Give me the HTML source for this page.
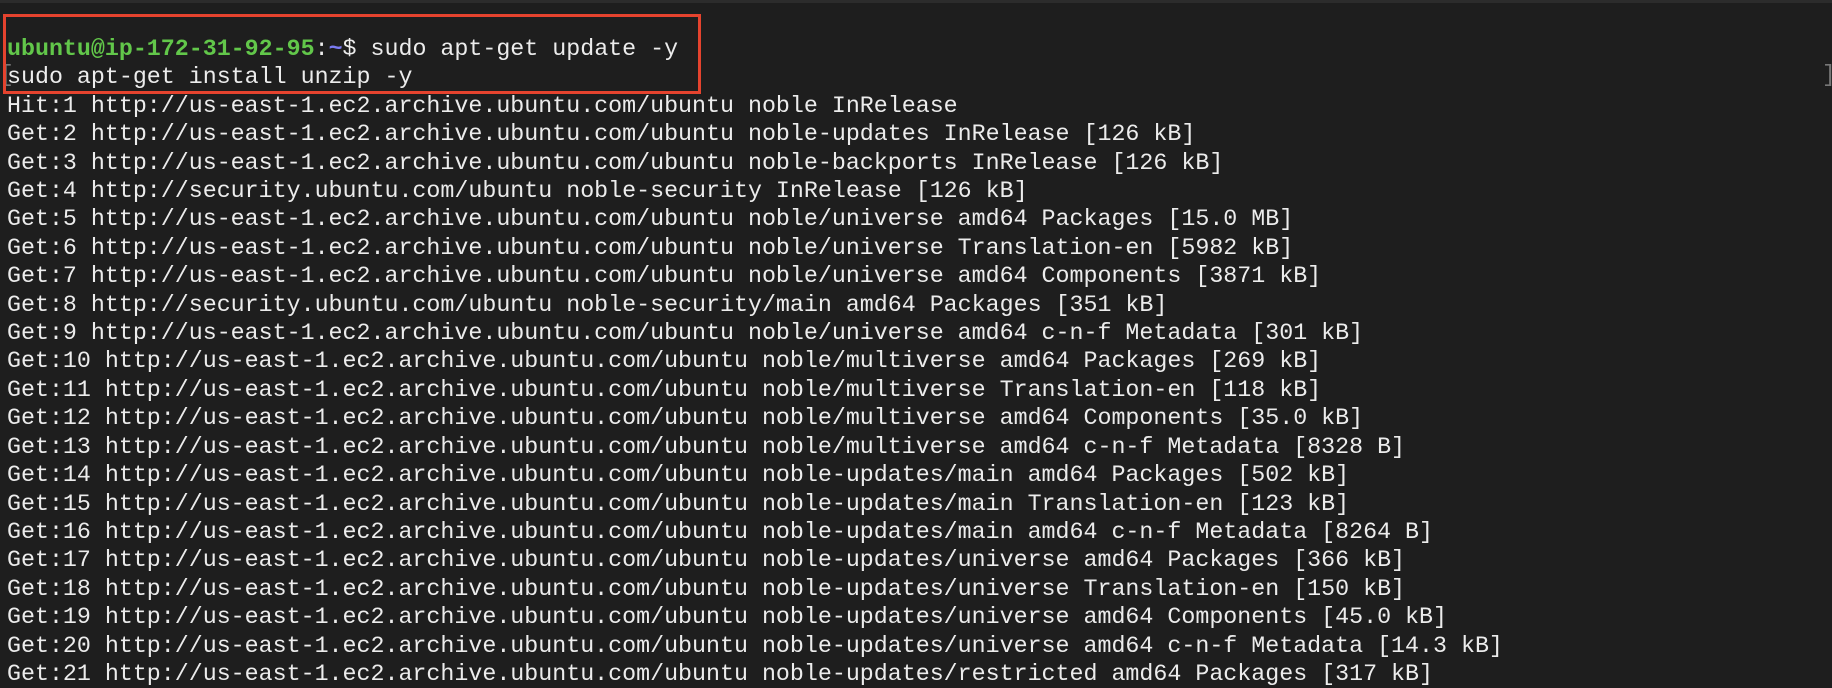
<!DOCTYPE html>
<html><head><meta charset="utf-8"><style>
html,body{margin:0;padding:0;}
body{width:1832px;height:684px;background:#1e1e1e;overflow:hidden;position:relative;}
.top{position:absolute;left:0;top:0;width:1832px;height:3px;background:#2c2c2c;}
pre{position:absolute;left:7px;top:35px;margin:0;font-family:"Liberation Mono",monospace;font-size:23.3px;line-height:28.4px;color:#ececec;}
.g{color:#62c74a;font-weight:bold;}
.b{color:#7b7bf2;font-weight:bold;}
.box{position:absolute;left:3px;top:14px;width:692px;height:74px;border:3px solid #e5432e;}
.lb{position:absolute;left:0;top:62px;font-family:"Liberation Mono",monospace;font-size:23px;color:#777;}
.rb{position:absolute;left:1822px;top:62px;font-family:"Liberation Mono",monospace;font-size:23px;color:#777;}
</style></head><body>
<div class="top"></div>
<div class="lb">[</div><div class="rb">]</div>
<pre><span class="g">ubuntu@ip-172-31-92-95</span>:<span class="b">~</span>$ sudo apt-get update -y
sudo apt-get install unzip -y
Hit:1 http://us-east-1.ec2.archive.ubuntu.com/ubuntu noble InRelease
Get:2 http://us-east-1.ec2.archive.ubuntu.com/ubuntu noble-updates InRelease [126 kB]
Get:3 http://us-east-1.ec2.archive.ubuntu.com/ubuntu noble-backports InRelease [126 kB]
Get:4 http://security.ubuntu.com/ubuntu noble-security InRelease [126 kB]
Get:5 http://us-east-1.ec2.archive.ubuntu.com/ubuntu noble/universe amd64 Packages [15.0 MB]
Get:6 http://us-east-1.ec2.archive.ubuntu.com/ubuntu noble/universe Translation-en [5982 kB]
Get:7 http://us-east-1.ec2.archive.ubuntu.com/ubuntu noble/universe amd64 Components [3871 kB]
Get:8 http://security.ubuntu.com/ubuntu noble-security/main amd64 Packages [351 kB]
Get:9 http://us-east-1.ec2.archive.ubuntu.com/ubuntu noble/universe amd64 c-n-f Metadata [301 kB]
Get:10 http://us-east-1.ec2.archive.ubuntu.com/ubuntu noble/multiverse amd64 Packages [269 kB]
Get:11 http://us-east-1.ec2.archive.ubuntu.com/ubuntu noble/multiverse Translation-en [118 kB]
Get:12 http://us-east-1.ec2.archive.ubuntu.com/ubuntu noble/multiverse amd64 Components [35.0 kB]
Get:13 http://us-east-1.ec2.archive.ubuntu.com/ubuntu noble/multiverse amd64 c-n-f Metadata [8328 B]
Get:14 http://us-east-1.ec2.archive.ubuntu.com/ubuntu noble-updates/main amd64 Packages [502 kB]
Get:15 http://us-east-1.ec2.archive.ubuntu.com/ubuntu noble-updates/main Translation-en [123 kB]
Get:16 http://us-east-1.ec2.archive.ubuntu.com/ubuntu noble-updates/main amd64 c-n-f Metadata [8264 B]
Get:17 http://us-east-1.ec2.archive.ubuntu.com/ubuntu noble-updates/universe amd64 Packages [366 kB]
Get:18 http://us-east-1.ec2.archive.ubuntu.com/ubuntu noble-updates/universe Translation-en [150 kB]
Get:19 http://us-east-1.ec2.archive.ubuntu.com/ubuntu noble-updates/universe amd64 Components [45.0 kB]
Get:20 http://us-east-1.ec2.archive.ubuntu.com/ubuntu noble-updates/universe amd64 c-n-f Metadata [14.3 kB]
Get:21 http://us-east-1.ec2.archive.ubuntu.com/ubuntu noble-updates/restricted amd64 Packages [317 kB]</pre>
<div class="box"></div>
</body></html>
